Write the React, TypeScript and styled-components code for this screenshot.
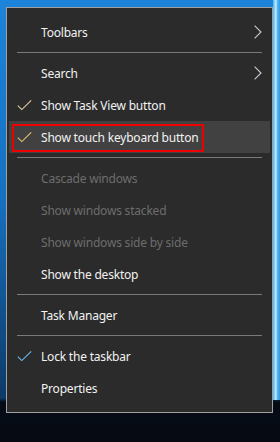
import React from "react";
import styled, { createGlobalStyle } from "styled-components";

const GlobalStyle = createGlobalStyle`
  html, body {
    margin: 0;
    padding: 0;
  }
  body {
    font-family: "Noto Sans", "Open Sans", sans-serif;
  }
`;

const Desktop = styled.div`
  width: 280px;
  height: 442px;
  overflow: hidden;
  padding: 7px 7px 0 6px;
  box-sizing: border-box;
  background:
    linear-gradient(
      to right,
      transparent 273px,
      #4fb9f3 273px,
      #8fd3f8 275px,
      #e6f6ff 276px,
      #5cbcf2 277px,
      #2c9be6 280px
    ) 0 0 / 100% 400px no-repeat,
    linear-gradient(
      to bottom,
      #1c84da 0,
      #1670c0 200px,
      #0d3a66 398px,
      #060c16 402px,
      #050a12 100%
    );
`;

const Menu = styled.div`
  width: 267px;
  box-sizing: border-box;
  background: #2b2b2b;
  border: 1px solid #a0a0a0;
  padding: 8px 0;
  display: flex;
  flex-direction: column;
`;

const Row = styled.div<{ $hover?: boolean; $disabled?: boolean }>`
  position: relative;
  height: 32px;
  margin: 0 2px;
  padding: 0 8px 0 32px;
  display: flex;
  align-items: center;
  background: ${(p) => (p.$hover ? "#414141" : "transparent")};
  color: ${(p) => (p.$disabled ? "#6d6d6d" : "#f2f2f2")};
  font-size: 12px;
  letter-spacing: -0.2px;
  white-space: nowrap;
`;

const Label = styled.span`
  flex: 1;
`;

const CheckBox = styled.span`
  position: absolute;
  left: 8px;
  top: 11px;
  width: 15px;
  height: 11px;
  display: flex;
`;

const Separator = styled.div`
  height: 9px;
  display: flex;
  align-items: center;
  padding: 0 10px;
  &::after {
    content: "";
    flex: 1;
    height: 1px;
    background: #7a7a7a;
  }
`;

// red annotation frame drawn over the highlighted item
const Callout = styled.div`
  position: absolute;
  left: 3px;
  top: 3px;
  width: 192px;
  height: 28px;
  box-sizing: border-box;
  border: 2px solid #ee0000;
  pointer-events: none;
`;

const Check = ({ color }: { color: string }) => (
  <CheckBox>
    <svg width="15" height="11" viewBox="0 0 15 11">
      <path d="M0.8 5.6 L4.8 9.6 L14.2 0.4" fill="none" stroke={color} strokeWidth="1.1" />
    </svg>
  </CheckBox>
);

const Chevron = () => (
  <svg width="8" height="14" viewBox="0 0 8 14">
    <path d="M0.6 0.6 L7 7 L0.6 13.4" fill="none" stroke="#c6ccd6" strokeWidth="1.1" />
  </svg>
);

const App = () => {
  return (
    <>
      <GlobalStyle />
      <Desktop>
        <Menu>
          <Row>
            <Label>Toolbars</Label>
            <Chevron />
          </Row>
          <Separator />
          <Row>
            <Label>Search</Label>
            <Chevron />
          </Row>
          <Row>
            <Check color="#e2cfa0" />
            <Label>Show Task View button</Label>
          </Row>
          <Row $hover>
            <Check color="#e6be78" />
            <Label>Show touch keyboard button</Label>
            <Callout />
          </Row>
          <Separator />
          <Row $disabled>
            <Label>Cascade windows</Label>
          </Row>
          <Row $disabled>
            <Label>Show windows stacked</Label>
          </Row>
          <Row $disabled>
            <Label>Show windows side by side</Label>
          </Row>
          <Row>
            <Label>Show the desktop</Label>
          </Row>
          <Separator />
          <Row>
            <Label>Task Manager</Label>
          </Row>
          <Separator />
          <Row>
            <Check color="#6ab8f0" />
            <Label>Lock the taskbar</Label>
          </Row>
          <Row>
            <Label>Properties</Label>
          </Row>
        </Menu>
      </Desktop>
    </>
  );
};

export default App;
